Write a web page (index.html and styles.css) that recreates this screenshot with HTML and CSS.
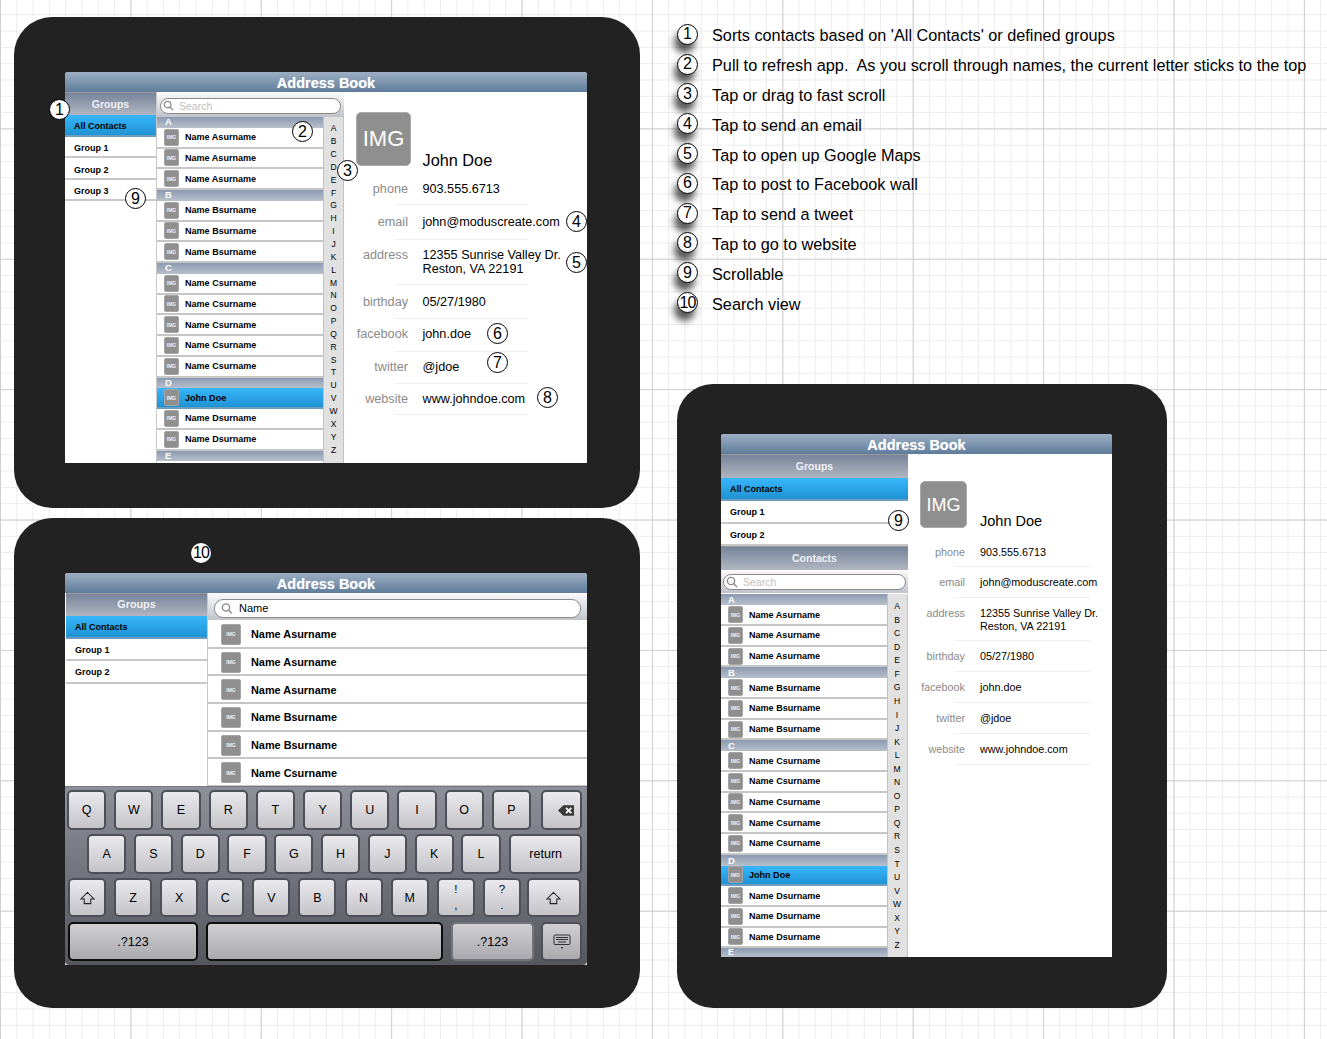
FILE: index.html
```html
<!DOCTYPE html>
<html lang="en">
<head>
<meta charset="utf-8">
<title>Address Book wireframes</title>
<link rel="stylesheet" href="styles.css">
</head>
<body>
<section class="device device-a">
  <div class="screen">
    <div class="titlebar">Address Book</div>
    <div class="body">
      <div class="groups">
        <div class="pane-head">Groups</div>
        <div class="group selected">All Contacts</div>
        <div class="group">Group 1</div>
        <div class="group">Group 2</div>
        <div class="group">Group 3</div>
      </div>
      <div class="contacts">
        <div class="search"><div class="pill"><svg class="lens" viewBox="0 0 12 12"><circle cx="5" cy="5" r="3.6"/><path d="M7.6 7.6 11 11"/></svg><span>Search</span></div></div>
        <div class="browse">
          <div class="list">
            <div class="sec">A</div>
            <div class="row"><span class="thumb">IMG</span>Name Asurname</div>
            <div class="row"><span class="thumb">IMG</span>Name Asurname</div>
            <div class="row"><span class="thumb">IMG</span>Name Asurname</div>
            <div class="sec">B</div>
            <div class="row"><span class="thumb">IMG</span>Name Bsurname</div>
            <div class="row"><span class="thumb">IMG</span>Name Bsurname</div>
            <div class="row"><span class="thumb">IMG</span>Name Bsurname</div>
            <div class="sec">C</div>
            <div class="row"><span class="thumb">IMG</span>Name Csurname</div>
            <div class="row"><span class="thumb">IMG</span>Name Csurname</div>
            <div class="row"><span class="thumb">IMG</span>Name Csurname</div>
            <div class="row"><span class="thumb">IMG</span>Name Csurname</div>
            <div class="row"><span class="thumb">IMG</span>Name Csurname</div>
            <div class="sec">D</div>
            <div class="row selected"><span class="thumb">IMG</span>John Doe</div>
            <div class="row"><span class="thumb">IMG</span>Name Dsurname</div>
            <div class="row"><span class="thumb">IMG</span>Name Dsurname</div>
            <div class="sec">E</div>
          </div>
          <div class="index"><span>A</span><span>B</span><span>C</span><span>D</span><span>E</span><span>F</span><span>G</span><span>H</span><span>I</span><span>J</span><span>K</span><span>L</span><span>M</span><span>N</span><span>O</span><span>P</span><span>Q</span><span>R</span><span>S</span><span>T</span><span>U</span><span>V</span><span>W</span><span>X</span><span>Y</span><span>Z</span></div>
        </div>
      </div>
      <div class="detail">
        <div class="head"><span class="photo">IMG</span><span class="fullname">John Doe</span></div>
        <div class="field"><span class="label">phone</span><span>903.555.6713</span></div>
        <div class="field"><span class="label">email</span><span>john@moduscreate.com</span></div>
        <div class="field"><span class="label">address</span><span>12355 Sunrise Valley Dr.<br>Reston, VA 22191</span></div>
        <div class="field"><span class="label">birthday</span><span>05/27/1980</span></div>
        <div class="field"><span class="label">facebook</span><span>john.doe</span></div>
        <div class="field"><span class="label">twitter</span><span>@jdoe</span></div>
        <div class="field"><span class="label">website</span><span>www.johndoe.com</span></div>
      </div>
    </div>
  </div>
</section>

<section class="device device-b">
  <div class="screen">
    <div class="titlebar">Address Book</div>
    <div class="body">
      <div class="groups">
        <div class="pane-head">Groups</div>
        <div class="group selected">All Contacts</div>
        <div class="group">Group 1</div>
        <div class="group">Group 2</div>
      </div>
      <div class="contacts">
        <div class="search"><div class="pill"><svg class="lens" viewBox="0 0 12 12"><circle cx="5" cy="5" r="3.6"/><path d="M7.6 7.6 11 11"/></svg><span class="typed">Name</span></div></div>
        <div class="list">
          <div class="row"><span class="thumb">IMG</span>Name Asurname</div>
          <div class="row"><span class="thumb">IMG</span>Name Asurname</div>
          <div class="row"><span class="thumb">IMG</span>Name Asurname</div>
          <div class="row"><span class="thumb">IMG</span>Name Bsurname</div>
          <div class="row"><span class="thumb">IMG</span>Name Bsurname</div>
          <div class="row"><span class="thumb">IMG</span>Name Csurname</div>
        </div>
      </div>
    </div>
    <div class="keyboard">
      <div class="keys keys-1">
        <span class="key">Q</span><span class="key">W</span><span class="key">E</span><span class="key">R</span><span class="key">T</span><span class="key">Y</span><span class="key">U</span><span class="key">I</span><span class="key">O</span><span class="key">P</span>
        <span class="key key-del"><svg class="ico-del" viewBox="0 0 18 12"><path class="solid" d="M0 6 6 0h12v12H6z"/><path class="cut" d="m9 3 6 6m0-6-6 6"/></svg></span>
      </div>
      <div class="keys keys-2">
        <span class="key">A</span><span class="key">S</span><span class="key">D</span><span class="key">F</span><span class="key">G</span><span class="key">H</span><span class="key">J</span><span class="key">K</span><span class="key">L</span>
        <span class="key key-return">return</span>
      </div>
      <div class="keys keys-3">
        <span class="key"><svg class="ico-shift" viewBox="0 0 16 14"><path d="M8 1 1 8h3.5v5h7V8H15z"/></svg></span>
        <span class="key">Z</span><span class="key">X</span><span class="key">C</span><span class="key">V</span><span class="key">B</span><span class="key">N</span><span class="key">M</span>
        <span class="key key-punct"><span>!</span><span>,</span></span><span class="key key-punct"><span>?</span><span>.</span></span>
        <span class="key key-shift"><svg class="ico-shift" viewBox="0 0 16 14"><path d="M8 1 1 8h3.5v5h7V8H15z"/></svg></span>
      </div>
      <div class="keys keys-4">
        <span class="key key-sym">.?123</span>
        <span class="key key-space"></span>
        <span class="key key-sym2">.?123</span>
        <span class="key key-hide"><svg class="ico-kbd" viewBox="0 0 18 16"><rect x="1" y="1" width="16" height="9.500" rx="1"/><path d="M3 3.500h12M3 5.500h12M5 8h8"/><path class="tip" d="M7.700 13h2.600L9 15z"/></svg></span>
      </div>
    </div>
  </div>
</section>

<section class="device device-c">
  <div class="screen">
    <div class="titlebar">Address Book</div>
    <div class="body">
      <div class="side">
        <div class="groups">
          <div class="pane-head">Groups</div>
          <div class="group selected">All Contacts</div>
          <div class="group">Group 1</div>
          <div class="group">Group 2</div>
        </div>
        <div class="contacts">
          <div class="pane-head">Contacts</div>
          <div class="search"><div class="pill"><svg class="lens" viewBox="0 0 12 12"><circle cx="5" cy="5" r="3.6"/><path d="M7.6 7.6 11 11"/></svg><span>Search</span></div></div>
          <div class="browse">
            <div class="list">
              <div class="sec">A</div>
              <div class="row"><span class="thumb">IMG</span>Name Asurname</div>
              <div class="row"><span class="thumb">IMG</span>Name Asurname</div>
              <div class="row"><span class="thumb">IMG</span>Name Asurname</div>
              <div class="sec">B</div>
              <div class="row"><span class="thumb">IMG</span>Name Bsurname</div>
              <div class="row"><span class="thumb">IMG</span>Name Bsurname</div>
              <div class="row"><span class="thumb">IMG</span>Name Bsurname</div>
              <div class="sec">C</div>
              <div class="row"><span class="thumb">IMG</span>Name Csurname</div>
              <div class="row"><span class="thumb">IMG</span>Name Csurname</div>
              <div class="row"><span class="thumb">IMG</span>Name Csurname</div>
              <div class="row"><span class="thumb">IMG</span>Name Csurname</div>
              <div class="row"><span class="thumb">IMG</span>Name Csurname</div>
              <div class="sec">D</div>
              <div class="row selected"><span class="thumb">IMG</span>John Doe</div>
              <div class="row"><span class="thumb">IMG</span>Name Dsurname</div>
              <div class="row"><span class="thumb">IMG</span>Name Dsurname</div>
              <div class="row"><span class="thumb">IMG</span>Name Dsurname</div>
              <div class="sec">E</div>
            </div>
            <div class="index"><span>A</span><span>B</span><span>C</span><span>D</span><span>E</span><span>F</span><span>G</span><span>H</span><span>I</span><span>J</span><span>K</span><span>L</span><span>M</span><span>N</span><span>O</span><span>P</span><span>Q</span><span>R</span><span>S</span><span>T</span><span>U</span><span>V</span><span>W</span><span>X</span><span>Y</span><span>Z</span></div>
          </div>
        </div>
      </div>
      <div class="detail">
        <div class="head"><span class="photo">IMG</span><span class="fullname">John Doe</span></div>
        <div class="field"><span class="label">phone</span><span>903.555.6713</span></div>
        <div class="field"><span class="label">email</span><span>john@moduscreate.com</span></div>
        <div class="field"><span class="label">address</span><span>12355 Sunrise Valley Dr.<br>Reston, VA 22191</span></div>
        <div class="field"><span class="label">birthday</span><span>05/27/1980</span></div>
        <div class="field"><span class="label">facebook</span><span>john.doe</span></div>
        <div class="field"><span class="label">twitter</span><span>@jdoe</span></div>
        <div class="field"><span class="label">website</span><span>www.johndoe.com</span></div>
      </div>
    </div>
  </div>
</section>

<span class="pin pin-1">1</span>
<span class="pin pin-2">2</span>
<span class="pin pin-3">3</span>
<span class="pin pin-4">4</span>
<span class="pin pin-5">5</span>
<span class="pin pin-6">6</span>
<span class="pin pin-7">7</span>
<span class="pin pin-8">8</span>
<span class="pin pin-9a">9</span>
<span class="pin pin-9b">9</span>
<span class="pin pin-10">10</span>

<ol class="legend">
  <li><span class="num">1</span>Sorts contacts based on 'All Contacts' or defined groups</li>
  <li><span class="num">2</span>Pull to refresh app.&nbsp; As you scroll through names, the current letter sticks to the top</li>
  <li><span class="num">3</span>Tap or drag to fast scroll</li>
  <li><span class="num">4</span>Tap to send an email</li>
  <li><span class="num">5</span>Tap to open up Google Maps</li>
  <li><span class="num">6</span>Tap to post to Facebook wall</li>
  <li><span class="num">7</span>Tap to send a tweet</li>
  <li><span class="num">8</span>Tap to go to website</li>
  <li><span class="num">9</span>Scrollable</li>
  <li><span class="num num-wide">10</span>Search view</li>
</ol>
</body>
</html>
```

FILE: styles.css
```css
* { box-sizing: border-box; }

html, body { margin: 0; padding: 0; }

body {
  position: relative;
  width: 1327px;
  height: 1039px;
  overflow: hidden;
  font-family: "Liberation Sans", Arial, sans-serif;
  color: #000;
  background-color: #fff;
  background-image:
    linear-gradient(to right, #cfcfcf 1px, transparent 1px),
    linear-gradient(to bottom, #cfcfcf 1px, transparent 1px),
    linear-gradient(to right, #ececec 1px, transparent 1px),
    linear-gradient(to bottom, #ececec 1px, transparent 1px);
  background-size: 130.4px 130.4px, 130.4px 130.4px, 16.3px 16.3px, 16.3px 16.3px;
  background-position: 0 -2px, 0 -2px, 0 -2px, 0 -2px;
}

/* Tablets on the free canvas */
.device {
  position: absolute;
  background: #222;
  border-radius: 38px;
}

.device-a { left: 14px; top: 17px; width: 626px; height: 491px; padding: 55px 53px 45px 51px; }
.device-b { left: 14px; top: 518px; width: 626px; height: 490px; padding: 55px 53px 43px 51px; }
.device-c { left: 677px; top: 384px; width: 490px; height: 624px; padding: 50px 55px 51px 44px; border-radius: 36px; }

.screen {
  display: flex;
  flex-direction: column;
  height: 100%;
  overflow: hidden;
  background: #fff;
  border-radius: 3px 3px 0 0;
}

.titlebar {
  flex: none;
  height: 20px;
  font-size: 14.500px;
  font-weight: 700;
  line-height: 23px;
  text-align: center;
  color: #fff;
  background: linear-gradient(#9dafc3, #5e7c9a);
  text-shadow: 0 0 1px rgba(255, 255, 255, .5);
}

.body { flex: 1; display: flex; min-height: 0; }

/* Group pane */
.groups { flex: none; background: #fff; }

.pane-head {
  font-weight: 700;
  text-align: center;
  color: #eef0f4;
  background: linear-gradient(#77849a, #b0b6c1);
  border-top: 1px solid #999;
}

.group {
  display: flex;
  align-items: center;
  padding-top: 2px;
  font-weight: 700;
  border-bottom: 2px solid #c8c8c8;
  background: #fff;
}

.group.selected,
.row.selected {
  background: linear-gradient(#38b6fc, #1f93d4);
  border-bottom-color: #6f9dbb;
}

/* Contact list */
.contacts { display: flex; flex-direction: column; min-width: 0; }
.browse { flex: 1; display: flex; min-height: 0; }
.list { flex: 1; min-width: 0; overflow: hidden; }

.search {
  flex: none;
  display: flex;
  align-items: center;
  background: linear-gradient(#fbfbfc, #bfc3ca);
}

.pill {
  flex: 1;
  display: flex;
  align-items: center;
  background: #fff;
  border: 1px solid #8a8a8a;
  border-radius: 9px;
  color: #c0c0c0;
  font-size: 10.500px;
}

.lens { fill: none; stroke: #8b8b8b; stroke-width: 1.4; flex: none; }

.sec {
  color: #fff;
  font-weight: 700;
  background: linear-gradient(#8b9ab1, #b9c0cc);
  overflow: hidden;
}

.row {
  display: flex;
  align-items: center;
  font-weight: 700;
  background: #fff;
  border-bottom: 2px solid #c6c6c6;
  white-space: nowrap;
}

.thumb {
  flex: none;
  display: flex;
  align-items: center;
  justify-content: center;
  color: #f1f1f1;
  background: #8f8f8f;
  border: 1px solid #a5a5a5;
  border-radius: 2px;
  font-weight: 700;
}

.index {
  flex: none;
  display: flex;
  flex-direction: column;
  align-items: center;
  justify-content: space-around;
  background: #e1e1e1;
  border-left: 1px solid #c2c2c2;
  border-right: 1px solid #c2c2c2;
}

/* Contact detail */
.detail { flex: 1; min-width: 0; }

.head { display: flex; align-items: flex-end; }

.photo {
  flex: none;
  display: flex;
  align-items: center;
  justify-content: center;
  color: #fff;
  background: #8f8f8f;
  border: 1px solid #aaa;
  border-radius: 5px;
}

.field {
  display: grid;
  background-image: linear-gradient(#eee, #eee);
  background-repeat: no-repeat;
  background-position-y: 100%;
}

.label { text-align: right; color: #8a8a8a; }

/* Device A */
.device-a .groups { width: 92px; border-right: 1px solid #c8c8c8; }
.device-a .pane-head { height: 23px; font-size: 10.500px; line-height: 22px; }
.device-a .group { height: 21.500px; padding-left: 9px; font-size: 9px; }
.device-a .group + .group { padding-top: 4px; }
.device-a .contacts { width: 187px; }
.device-a .search { height: 25px; padding: 2px 3px 0; }
.device-a .pill { height: 16px; padding-left: 2px; }
.device-a .lens { width: 11px; height: 11px; margin-right: 5px; }
.device-a .sec { height: 10.750px; padding-left: 8px; font-size: 9.500px; line-height: 10px; }
.device-a .row { height: 20.750px; padding-left: 7px; font-size: 9.050px; }
.device-a .thumb { width: 15px; height: 17px; margin-right: 6px; font-size: 5px; }
.device-a .index { width: 21px; font-size: 8.500px; padding: 5px 0 7px; }
.device-a .detail { padding: 20px 0 0 12px; font-size: 12.650px; line-height: 14px; }
.device-a .head { height: 54px; margin-bottom: 15px; }
.device-a .photo { width: 55px; height: 54px; font-size: 22px; }
.device-a .fullname { margin-left: 11.500px; font-size: 16.300px; line-height: 16px; margin-bottom: -2px; }
.device-a .field { grid-template-columns: 52px auto; column-gap: 14.500px; padding: 10px 0 9px; background-size: 133px 1px; background-position-x: 39px; }
.device-a .field:nth-of-type(2) { padding-top: 1px; }
.device-a .field:nth-of-type(3) { padding: 10px 0 11px; }
.device-a .field:nth-of-type(4) { padding: 8px 0 9px; }
.device-a .field:nth-of-type(5) { padding: 10px 0 10px; }
.device-a .field:nth-of-type(6) { padding: 8px 0 11px; }
.device-a .field:nth-of-type(7) { padding: 8px 0 10px; }
.device-a .field:nth-of-type(8) { padding: 8px 0 9px; }

/* Device B */
.device-b .body { flex: none; height: 193px; }
.device-b .groups { width: 142px; margin-left: 1px; border-right: 1px solid #c8c8c8; }
.device-b .pane-head { height: 23px; font-size: 10.800px; line-height: 21px; }
.device-b .group { height: 22.500px; padding-left: 9px; font-size: 9px; }
.device-b .contacts { flex: 1; }
.device-b .search { height: 27px; padding: 3px 6px 0; }
.device-b .pill { height: 19px; padding-left: 6px; color: #000; }
.device-b .lens { width: 12px; height: 13px; margin-right: 6px; }
.device-b .typed { font-size: 11px; }
.device-b .list { padding-top: 1px; }
.device-b .row { height: 27.700px; padding: 1px 0 0 13px; font-size: 10.900px; }
.device-b .thumb { width: 20px; height: 21px; margin-right: 10px; font-size: 5px; }

.keyboard {
  flex: 1;
  display: flex;
  flex-direction: column;
  gap: 4px;
  padding: 3px 5px 4px 2px;
  border-top: 1px solid #777a82;
  border-radius: 0 0 4px 4px;
  background: linear-gradient(#8d9099, #54575e);
}

.keys { display: flex; height: 40px; gap: 7.900px; }
.keys-1 { padding-left: 0; }
.keys-2 { padding-left: 20px; gap: 7.500px; }
.keys-3 { height: 39px; gap: 8.100px; padding-left: 1px; }
.keys-4 { height: 39px; gap: 8px; padding-left: 1px; margin-top: 1px; }

.key {
  flex: none;
  display: flex;
  align-items: center;
  justify-content: center;
  width: 39.300px;
  font-size: 12.500px;
  border: 2px solid #4d5058;
  border-radius: 5px;
  background: linear-gradient(#eaeaee, #c3c3c8);
}

.keys-3 .key { width: 38px; }
.keys-1 .key-del { width: 41px; margin-left: 2px; padding-left: 10px; }
.keys-2 .key-return { width: 73px; margin-left: 1px; }
.keys-3 .key-shift { width: 54px; margin-left: -2px; }
.key-punct { flex-direction: column; justify-content: space-between; padding: 2px 0; line-height: 15px; font-size: 11.500px; }

.key-sym, .key-space, .key-sym2, .key-hide { background: linear-gradient(#d0d0d4, #a9a9ae); }
.key-sym { width: 130px; border-color: #0e0e0e; }
.key-space { width: 237px; border-color: #0e0e0e; }
.key-sym2 { width: 83px; border-color: #72757c; }
.key-hide { width: 41px; margin-left: -1px; }

.ico-del { width: 16px; height: 11px; }
.ico-del .solid { fill: #3a3a3a; }
.ico-del .cut { fill: none; stroke: #fff; stroke-width: 2; }
.ico-shift { width: 15px; height: 14px; fill: none; stroke: #222; stroke-width: 1.1; }
.ico-kbd { width: 18px; height: 16px; fill: none; stroke: #333; stroke-width: 1; }
.ico-kbd .tip { fill: #333; stroke: none; }

/* Device C */
.side { flex: none; width: 187px; display: flex; flex-direction: column; }
.device-c .pane-head { height: 24px; font-size: 10.500px; line-height: 22px; }
.device-c .group { height: 22.800px; padding-left: 9px; font-size: 9px; }
.device-c .contacts { flex: 1; min-height: 0; }
.device-c .search { height: 23px; padding: 0 2px; }
.device-c .pill { height: 16px; padding-left: 2px; }
.device-c .lens { width: 12px; height: 12px; margin-right: 5px; }
.device-c .sec { height: 11px; padding-left: 7px; font-size: 9.500px; line-height: 11px; }
.device-c .sec:last-child { height: 9px; line-height: 9px; font-size: 8.500px; }
.device-c .row { height: 20.670px; padding-left: 7px; font-size: 9.050px; }
.device-c .browse { padding-top: 1px; }
.device-c .thumb { width: 15px; height: 17px; margin-right: 6px; font-size: 5px; }
.device-c .index { width: 21px; font-size: 8.500px; padding: 5px 1px 5px 0; }
.device-c .detail { padding: 27px 0 0 12px; font-size: 10.800px; line-height: 13px; }
.device-c .head { height: 47px; margin-bottom: 18px; }
.device-c .photo { width: 47px; height: 47px; font-size: 18px; padding-top: 2px; }
.device-c .fullname { margin-left: 13px; font-size: 14.500px; line-height: 14px; }
.device-c .field { grid-template-columns: 45px auto; column-gap: 15px; padding: 9px 0; background-size: 135px 1px; background-position-x: 35px; }
.device-c .field:nth-of-type(2) { padding: 0 0 8px; }
.device-c .field:nth-of-type(4) { padding-bottom: 8px; }

/* Callout markers */
.pin {
  position: absolute;
  width: 21px;
  height: 21px;
  display: flex;
  align-items: center;
  justify-content: center;
  border: 1px solid #000;
  border-radius: 50%;
  background: #fff;
  font-size: 16px;
  line-height: 1;
}

.pin-1 { left: 49px; top: 99px; }
.pin-2 { left: 292px; top: 121px; }
.pin-3 { left: 337px; top: 160px; }
.pin-4 { left: 566px; top: 211px; }
.pin-5 { left: 566px; top: 252px; }
.pin-6 { left: 487px; top: 323px; }
.pin-7 { left: 487px; top: 352px; }
.pin-8 { left: 537px; top: 387px; }
.pin-9a { left: 125px; top: 188px; }
.pin-9b { left: 888px; top: 510px; }
.pin-10 { left: 191px; top: 543px; width: 20px; height: 20px; border: none; letter-spacing: -1px; }

/* Legend */
.legend {
  position: absolute;
  left: 677px;
  top: 21px;
  margin: 0;
  padding: 0;
  list-style: none;
  font-size: 16.250px;
}

.legend li {
  display: flex;
  align-items: center;
  height: 29.800px;
  white-space: nowrap;
}

.num {
  flex: none;
  width: 21px;
  height: 21px;
  margin-right: 14px;
  margin-top: -3px;
  display: flex;
  align-items: center;
  justify-content: center;
  border: 1px solid #000;
  border-radius: 50%;
  background: #fff;
  font-size: 16px;
  box-shadow: -3px 8px 7px rgba(0, 0, 0, .65);
}

.num-wide { letter-spacing: -1px; }
```
